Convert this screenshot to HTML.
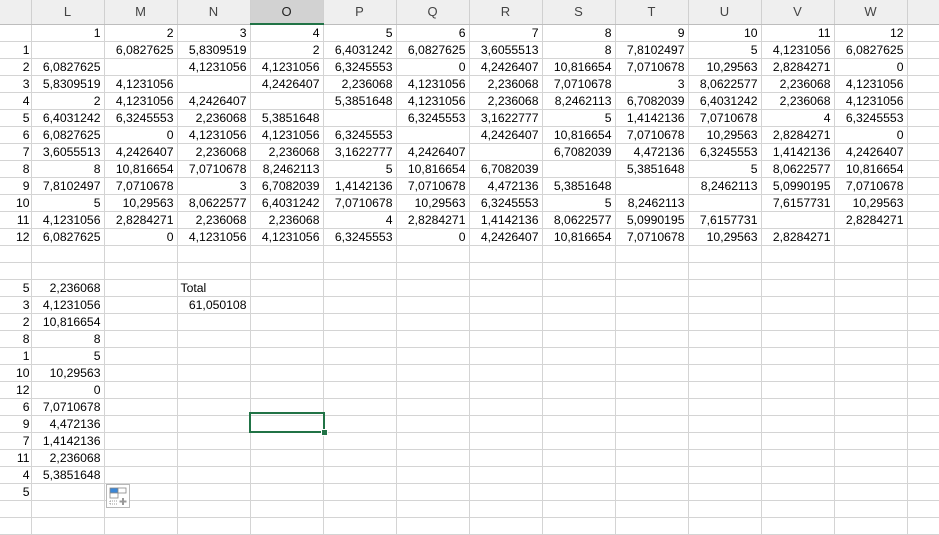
<!DOCTYPE html>
<html><head><meta charset="utf-8"><style>
body{margin:0;width:939px;height:530px;overflow:hidden;background:#fff;font-family:"Liberation Sans",Arial,sans-serif;position:relative}
table{border-collapse:collapse;table-layout:fixed;width:980px;position:absolute;left:-1px;top:0}
td{border:1px solid #d4d4d4;height:16px;padding:0 3px;font-size:12.2px;line-height:16px;text-align:right;white-space:nowrap;overflow:hidden;color:#000}
td:first-child{text-align:right;padding:0 1px 0 0;border-left:none}
tr.h td{height:22px;background:#efefef;text-align:center;color:#444;font-size:13px;border-color:#d0d0d0;border-top:none;border-bottom:1px solid #bdbdbd;padding-top:1px}
tr.h td.s{background:#d2d2d2;border-bottom:2px solid #217346;color:#222}
td.t{text-align:left}
#sel{position:absolute;left:249px;top:412px;width:72px;height:17px;border:2px solid #217346}
#hd{position:absolute;left:321px;top:429px;width:5px;height:5px;background:#217346;border:1px solid #fff}
#po{position:absolute;left:106px;top:484px;width:22px;height:22px;border:1px solid #b8b8b8;background:#fff}
</style></head><body>
<table>
<col style="width:32px"><col style="width:73px"><col style="width:73px"><col style="width:73px"><col style="width:73px"><col style="width:73px"><col style="width:73px"><col style="width:73px"><col style="width:73px"><col style="width:73px"><col style="width:73px"><col style="width:73px"><col style="width:73px"><col style="width:72px">
<tr class="h"><td></td><td>L</td><td>M</td><td>N</td><td class="s">O</td><td>P</td><td>Q</td><td>R</td><td>S</td><td>T</td><td>U</td><td>V</td><td>W</td><td></td></tr>
<tr><td></td><td>1</td><td>2</td><td>3</td><td>4</td><td>5</td><td>6</td><td>7</td><td>8</td><td>9</td><td>10</td><td>11</td><td>12</td><td></td></tr>
<tr><td>1</td><td></td><td>6,0827625</td><td>5,8309519</td><td>2</td><td>6,4031242</td><td>6,0827625</td><td>3,6055513</td><td>8</td><td>7,8102497</td><td>5</td><td>4,1231056</td><td>6,0827625</td><td></td></tr>
<tr><td>2</td><td>6,0827625</td><td></td><td>4,1231056</td><td>4,1231056</td><td>6,3245553</td><td>0</td><td>4,2426407</td><td>10,816654</td><td>7,0710678</td><td>10,29563</td><td>2,8284271</td><td>0</td><td></td></tr>
<tr><td>3</td><td>5,8309519</td><td>4,1231056</td><td></td><td>4,2426407</td><td>2,236068</td><td>4,1231056</td><td>2,236068</td><td>7,0710678</td><td>3</td><td>8,0622577</td><td>2,236068</td><td>4,1231056</td><td></td></tr>
<tr><td>4</td><td>2</td><td>4,1231056</td><td>4,2426407</td><td></td><td>5,3851648</td><td>4,1231056</td><td>2,236068</td><td>8,2462113</td><td>6,7082039</td><td>6,4031242</td><td>2,236068</td><td>4,1231056</td><td></td></tr>
<tr><td>5</td><td>6,4031242</td><td>6,3245553</td><td>2,236068</td><td>5,3851648</td><td></td><td>6,3245553</td><td>3,1622777</td><td>5</td><td>1,4142136</td><td>7,0710678</td><td>4</td><td>6,3245553</td><td></td></tr>
<tr><td>6</td><td>6,0827625</td><td>0</td><td>4,1231056</td><td>4,1231056</td><td>6,3245553</td><td></td><td>4,2426407</td><td>10,816654</td><td>7,0710678</td><td>10,29563</td><td>2,8284271</td><td>0</td><td></td></tr>
<tr><td>7</td><td>3,6055513</td><td>4,2426407</td><td>2,236068</td><td>2,236068</td><td>3,1622777</td><td>4,2426407</td><td></td><td>6,7082039</td><td>4,472136</td><td>6,3245553</td><td>1,4142136</td><td>4,2426407</td><td></td></tr>
<tr><td>8</td><td>8</td><td>10,816654</td><td>7,0710678</td><td>8,2462113</td><td>5</td><td>10,816654</td><td>6,7082039</td><td></td><td>5,3851648</td><td>5</td><td>8,0622577</td><td>10,816654</td><td></td></tr>
<tr><td>9</td><td>7,8102497</td><td>7,0710678</td><td>3</td><td>6,7082039</td><td>1,4142136</td><td>7,0710678</td><td>4,472136</td><td>5,3851648</td><td></td><td>8,2462113</td><td>5,0990195</td><td>7,0710678</td><td></td></tr>
<tr><td>10</td><td>5</td><td>10,29563</td><td>8,0622577</td><td>6,4031242</td><td>7,0710678</td><td>10,29563</td><td>6,3245553</td><td>5</td><td>8,2462113</td><td></td><td>7,6157731</td><td>10,29563</td><td></td></tr>
<tr><td>11</td><td>4,1231056</td><td>2,8284271</td><td>2,236068</td><td>2,236068</td><td>4</td><td>2,8284271</td><td>1,4142136</td><td>8,0622577</td><td>5,0990195</td><td>7,6157731</td><td></td><td>2,8284271</td><td></td></tr>
<tr><td>12</td><td>6,0827625</td><td>0</td><td>4,1231056</td><td>4,1231056</td><td>6,3245553</td><td>0</td><td>4,2426407</td><td>10,816654</td><td>7,0710678</td><td>10,29563</td><td>2,8284271</td><td></td><td></td></tr>
<tr><td></td><td></td><td></td><td></td><td></td><td></td><td></td><td></td><td></td><td></td><td></td><td></td><td></td><td></td></tr>
<tr><td></td><td></td><td></td><td></td><td></td><td></td><td></td><td></td><td></td><td></td><td></td><td></td><td></td><td></td></tr>
<tr><td>5</td><td>2,236068</td><td></td><td class="t">Total</td><td></td><td></td><td></td><td></td><td></td><td></td><td></td><td></td><td></td><td></td></tr>
<tr><td>3</td><td>4,1231056</td><td></td><td>61,050108</td><td></td><td></td><td></td><td></td><td></td><td></td><td></td><td></td><td></td><td></td></tr>
<tr><td>2</td><td>10,816654</td><td></td><td></td><td></td><td></td><td></td><td></td><td></td><td></td><td></td><td></td><td></td><td></td></tr>
<tr><td>8</td><td>8</td><td></td><td></td><td></td><td></td><td></td><td></td><td></td><td></td><td></td><td></td><td></td><td></td></tr>
<tr><td>1</td><td>5</td><td></td><td></td><td></td><td></td><td></td><td></td><td></td><td></td><td></td><td></td><td></td><td></td></tr>
<tr><td>10</td><td>10,29563</td><td></td><td></td><td></td><td></td><td></td><td></td><td></td><td></td><td></td><td></td><td></td><td></td></tr>
<tr><td>12</td><td>0</td><td></td><td></td><td></td><td></td><td></td><td></td><td></td><td></td><td></td><td></td><td></td><td></td></tr>
<tr><td>6</td><td>7,0710678</td><td></td><td></td><td></td><td></td><td></td><td></td><td></td><td></td><td></td><td></td><td></td><td></td></tr>
<tr><td>9</td><td>4,472136</td><td></td><td></td><td></td><td></td><td></td><td></td><td></td><td></td><td></td><td></td><td></td><td></td></tr>
<tr><td>7</td><td>1,4142136</td><td></td><td></td><td></td><td></td><td></td><td></td><td></td><td></td><td></td><td></td><td></td><td></td></tr>
<tr><td>11</td><td>2,236068</td><td></td><td></td><td></td><td></td><td></td><td></td><td></td><td></td><td></td><td></td><td></td><td></td></tr>
<tr><td>4</td><td>5,3851648</td><td></td><td></td><td></td><td></td><td></td><td></td><td></td><td></td><td></td><td></td><td></td><td></td></tr>
<tr><td>5</td><td></td><td></td><td></td><td></td><td></td><td></td><td></td><td></td><td></td><td></td><td></td><td></td><td></td></tr>
<tr><td></td><td></td><td></td><td></td><td></td><td></td><td></td><td></td><td></td><td></td><td></td><td></td><td></td><td></td></tr>
<tr><td></td><td></td><td></td><td></td><td></td><td></td><td></td><td></td><td></td><td></td><td></td><td></td><td></td><td></td></tr>
</table>
<div id="sel"></div><div id="hd"></div>
<div id="po"><svg width="22" height="22" viewBox="0 0 22 22"><rect x="3" y="3" width="8" height="5" fill="#3a86d6" stroke="#888" stroke-width="0.8"/><rect x="11" y="3" width="8" height="5" fill="#fff" stroke="#888" stroke-width="0.8"/><rect x="3" y="8" width="8" height="5" fill="#fff" stroke="#888" stroke-width="0.8"/><path d="M3 16h8M3 16v3M3 19h8" stroke="#999" stroke-dasharray="1,1" fill="none"/><path d="M16 13v7M12.5 16.5h7" stroke="#999" stroke-width="2"/></svg></div>
</body></html>
